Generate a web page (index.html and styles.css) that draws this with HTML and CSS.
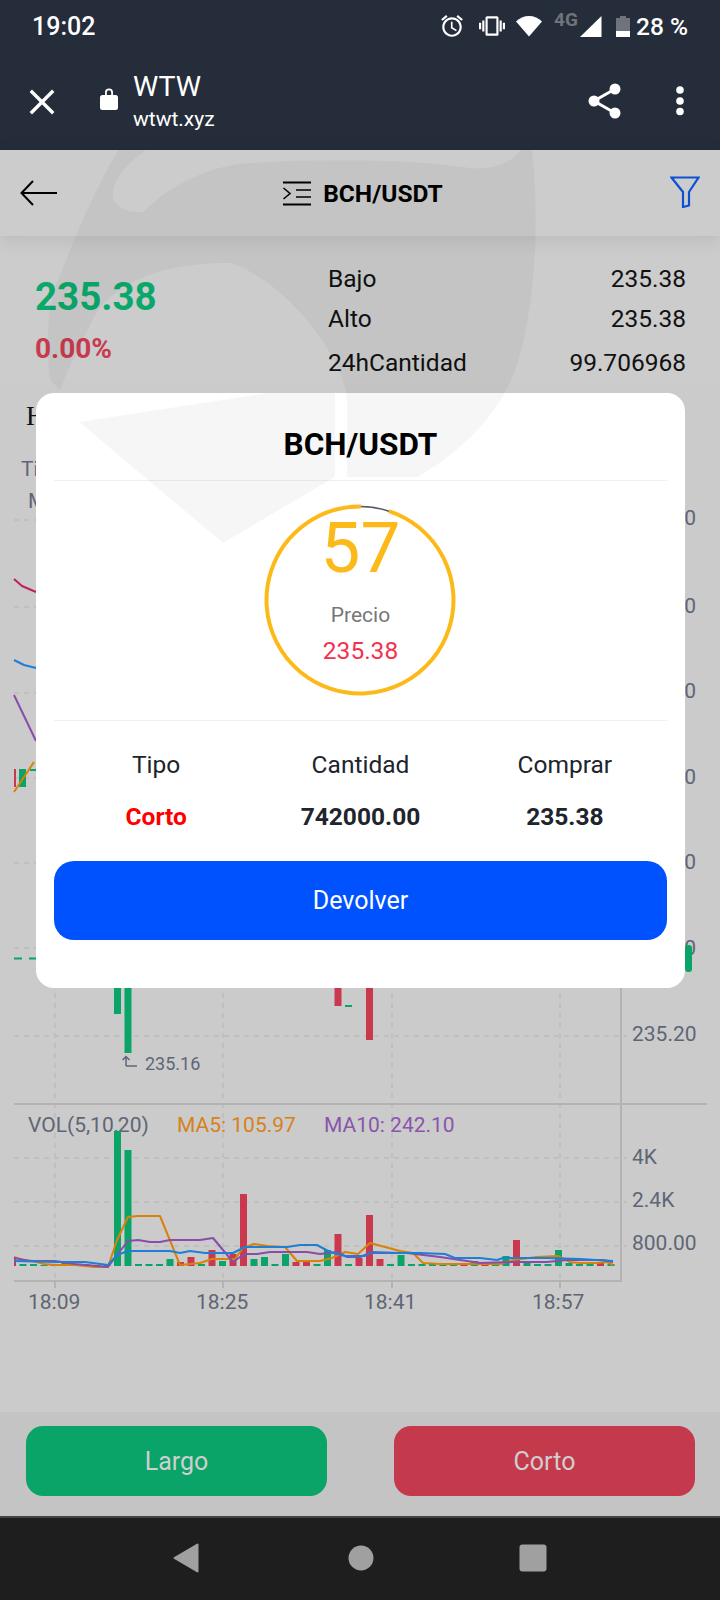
FILE: index.html
```html
<!DOCTYPE html>
<html lang="es">
<head>
<meta charset="utf-8">
<title>WTW</title>
<link rel="stylesheet" href="styles.css">
</head>
<body>
<div class="phone">
  <div class="topbar">
    <div class="status">
      <span class="time">19:02</span>
      <div class="status-icons">
        <svg class="ic-alarm" width="26" height="26" viewBox="0 0 24 24"><path fill="#fff" d="M22 5.72l-4.6-3.86-1.29 1.53 4.6 3.86L22 5.72zM7.88 3.39L6.6 1.86 2 5.71l1.29 1.53 4.59-3.85zM12.5 8H11v6l4.75 2.85.75-1.23-4-2.37V8zM12 4c-4.97 0-9 4.03-9 9s4.03 9 9 9 9-4.03 9-9-4.03-9-9-9zm0 16c-3.87 0-7-3.13-7-7s3.13-7 7-7 7 3.13 7 7-3.13 7-7 7z"/></svg>
        <svg class="ic-vib" width="26" height="26" viewBox="0 0 24 24"><path fill="#fff" d="M0 15h2V9H0v6zm3 2h2V7H3v10zm19-8v6h2V9h-2zm-3 8h2V7h-2v10zM16.5 3h-9C6.67 3 6 3.67 6 4.5v15c0 .83.67 1.5 1.5 1.5h9c.83 0 1.5-.67 1.5-1.5v-15c0-.83-.67-1.5-1.5-1.5zM16 19H8V5h8v14z"/></svg>
        <svg class="ic-wifi" width="26" height="22" viewBox="0 0 26 22"><path fill="#fff" d="M0 6.5C3.5 3 8 1 13 1s9.500 2 13 5.500L13 21.500z"/></svg>
        <span class="net">4G</span>
        <svg class="ic-signal" width="22" height="21" viewBox="0 0 22 21"><path fill="#fff" d="M21.500 0v21H0z"/></svg>
        <svg class="ic-batt" width="14" height="21" viewBox="0 0 14 21"><path fill="#6f747c" d="M4 0h6v2h4v13H0V2h4z"/><path fill="#fff" d="M0 15h14v6H0z"/></svg>
        <span class="pct">28 %</span>
      </div>
    </div>
    <div class="browser">
      <svg class="ic-close" width="26" height="26" viewBox="0 0 26 26"><path stroke="#fff" stroke-width="3.400" stroke-linecap="square" d="M3 3l20 20M23 3L3 23"/></svg>
      <svg class="ic-lock" width="18" height="23" viewBox="0 0 18 23"><path fill="#fff" d="M5 8V5.500a4 4 0 0 1 8 0V8h-1.800V5.500a2.200 2.200 0 0 0-4.400 0V8z"/><rect fill="#fff" y="8" width="18" height="15" rx="2.500"/></svg>
      <div class="site">
        <div class="site-name">WTW</div>
        <div class="site-url">wtwt.xyz</div>
      </div>
      <svg class="ic-share" width="34" height="36" viewBox="0 0 34 36"><path stroke="#fff" stroke-width="3" fill="none" d="M27 6L6 18l21 12"/><circle fill="#fff" cx="27" cy="6" r="5.500"/><circle fill="#fff" cx="6" cy="18" r="5.500"/><circle fill="#fff" cx="27" cy="30" r="5.500"/></svg>
      <svg class="ic-more" width="10" height="32" viewBox="0 0 10 32"><circle fill="#fff" cx="5" cy="5" r="3.800"/><circle fill="#fff" cx="5" cy="16" r="3.800"/><circle fill="#fff" cx="5" cy="26.500" r="3.800"/></svg>
    </div>
  </div>

  <main class="page">
    <header class="head">
      <svg class="ic-back" width="38" height="26" viewBox="0 0 38 26"><path stroke="#000" stroke-width="2" fill="none" d="M37 13H2M13 1L1.500 13 13 25"/></svg>
      <div class="head-title">
        <svg width="30" height="25" viewBox="0 0 30 25"><path stroke="#000" stroke-width="2.200" fill="none" d="M1 1.500h28M1 23.500h28"/><path stroke="#000" stroke-width="1.600" fill="none" d="M14 9h15M14 16h15M1.500 7L8 12.500 1.500 18"/></svg>
        <span>BCH/USDT</span>
      </div>
      <svg class="ic-filter" width="30" height="32" viewBox="0 0 30 32"><path stroke="#0e50d4" stroke-width="2.200" fill="none" d="M1.500 1.500h27L19 16v13.500l-6 1.500V16z"/></svg>
    </header>

    <section class="info">
      <div class="quote">
        <div class="price">235.38</div>
        <div class="change">0.00%</div>
      </div>
      <div class="stats">
        <div class="stat stat-a"><span>Bajo</span><span>235.38</span></div>
        <div class="stat stat-b"><span>Alto</span><span>235.38</span></div>
        <div class="stat stat-c"><span>24hCantidad</span><span>99.706968</span></div>
      </div>
    </section>

    <section class="chart">
      <svg class="chart-svg" width="720" height="1029" viewBox="0 383 720 1029">
        <text class="serif" x="26" y="425">H</text>
        <text class="ct" x="21" y="476">Ti</text>
        <text class="ct" x="28" y="508">M</text>

        <path class="grid" d="M14 520H627M14 607H627M14 693H627M14 778H627M14 863H627M14 948H627M14 1036H627M14 1158H627M14 1202H627M14 1246H627"/>
        <path class="grid" d="M55 393V1281M223 393V1281M392 393V1281M560 393V1281"/>

        <path class="axis" d="M621 393V1282M14 1104H707M14 1281H622M55 1281v7M223 1281v7M392 1281v7M560 1281v7"/>

        <text class="ct" x="696" y="525" text-anchor="end">0</text>
        <text class="ct" x="696" y="613" text-anchor="end">0</text>
        <text class="ct" x="696" y="698" text-anchor="end">0</text>
        <text class="ct" x="696" y="784" text-anchor="end">0</text>
        <text class="ct" x="696" y="869" text-anchor="end">0</text>
        <text class="ct" x="696" y="955" text-anchor="end">0</text>
        <text class="ct" x="632" y="1041">235.20</text>
        <text class="ct" x="632" y="1164">4K</text>
        <text class="ct" x="632" y="1207">2.4K</text>
        <text class="ct" x="632" y="1250">800.00</text>

        <rect class="up" x="685" y="945" width="7" height="27" rx="3"/>
        <path class="pline" d="M14 958.500H40"/>

        <polyline class="l-pink" points="14,579 22,586 36,592"/>
        <polyline class="l-blue" points="14,660 24,665 36,668"/>
        <polyline class="l-purple" points="14,695 36,741"/>
        <rect class="down" x="14" y="769" width="2" height="18"/>
        <rect class="up" x="19" y="769" width="7" height="18"/>
        <rect class="up" x="30" y="769" width="6" height="2"/>
        <polyline class="l-orange" points="14,792 34,762"/>

        <rect class="up" x="114" y="960" width="7" height="54"/>
        <rect class="up" x="124.500" y="960" width="7" height="93"/>
        <rect class="down" x="334.500" y="960" width="7" height="46"/>
        <rect class="up" x="345" y="1005" width="7" height="2"/>
        <rect class="down" x="366" y="960" width="7" height="80"/>

        <path class="mark" d="M126 1066v-9M122.500 1060l3.500-3.500 3.500 3.500M126 1066h11"/>
        <text class="cs" x="145" y="1069.500">235.16</text>

        <text class="ct" x="28" y="1131.500">VOL(5,10,20)</text>
        <text class="ct t-orange" x="177" y="1131.500">MA5: 105.97</text>
        <text class="ct t-purple" x="324" y="1131.500">MA10: 242.10</text>

        <g class="up">
          <rect x="19.500" y="1264" width="7" height="2"/><rect x="30" y="1264" width="7" height="2"/><rect x="40.500" y="1265" width="7" height="1"/><rect x="82.500" y="1264" width="7" height="2"/>
          <rect x="114" y="1131" width="7" height="135"/><rect x="124.500" y="1150" width="7" height="116"/><rect x="135" y="1264" width="7" height="2"/><rect x="145.500" y="1264" width="7" height="2"/><rect x="156" y="1264" width="7" height="2"/><rect x="166.500" y="1259" width="7" height="7"/>
          <rect x="198" y="1264" width="7" height="2"/><rect x="219" y="1261" width="7" height="5"/><rect x="250.500" y="1259" width="7" height="7"/><rect x="261" y="1257" width="7" height="9"/><rect x="271.500" y="1264" width="7" height="2"/><rect x="282" y="1254" width="7" height="12"/>
          <rect x="313.500" y="1264" width="7" height="2"/><rect x="324" y="1250" width="7" height="16"/><rect x="345" y="1264" width="7" height="2"/><rect x="387" y="1264" width="7" height="2"/><rect x="397.500" y="1255" width="7" height="11"/>
          <rect x="408" y="1264" width="7" height="2"/><rect x="418.500" y="1264" width="7" height="2"/><rect x="429" y="1264" width="7" height="2"/><rect x="439.500" y="1264" width="7" height="2"/><rect x="450" y="1263" width="7" height="3"/><rect x="471" y="1261" width="7" height="5"/>
          <rect x="492" y="1264" width="7" height="2"/><rect x="502.500" y="1256" width="7" height="10"/><rect x="523.500" y="1263" width="7" height="3"/><rect x="534" y="1264" width="7" height="2"/><rect x="544.500" y="1264" width="7" height="2"/><rect x="555" y="1250" width="7" height="16"/>
          <rect x="565.500" y="1263" width="7" height="3"/><rect x="576" y="1264" width="7" height="2"/><rect x="586.500" y="1264" width="7" height="2"/><rect x="607.500" y="1264" width="7" height="2"/>
        </g>
        <g class="down">
          <rect x="14" y="1257" width="2" height="9"/><rect x="51" y="1264" width="7" height="2"/><rect x="61.500" y="1262" width="7" height="4"/><rect x="72" y="1264" width="7" height="2"/><rect x="93" y="1265" width="7" height="1"/><rect x="103.500" y="1264" width="7" height="2"/>
          <rect x="177" y="1262" width="7" height="4"/><rect x="187.500" y="1257" width="7" height="9"/><rect x="208.500" y="1250" width="7" height="16"/><rect x="229.500" y="1254" width="7" height="12"/><rect x="240" y="1194" width="7" height="72"/>
          <rect x="292.500" y="1262" width="7" height="4"/><rect x="303" y="1262" width="7" height="4"/><rect x="334.500" y="1234" width="7" height="32"/><rect x="355.500" y="1258" width="7" height="8"/><rect x="366" y="1215" width="7" height="51"/><rect x="376.500" y="1259" width="7" height="7"/>
          <rect x="460.500" y="1263" width="7" height="3"/><rect x="481.500" y="1264" width="7" height="2"/><rect x="513" y="1240" width="7" height="26"/><rect x="597" y="1263" width="7" height="3"/>
        </g>

        <polyline class="l-orange" points="14,1257 23,1260 33,1261 44,1264 55,1265 75,1265 95,1267 108,1267 117,1240 128,1217 138,1216 160,1216 180,1265 200,1263 212,1259 235,1259 243,1248 254,1244 268,1246 285,1247 297,1261 320,1261 332,1258 345,1252 358,1254 370,1243 385,1247 400,1251 413,1253 423,1263 440,1264 460,1264 473,1264 500,1264 513,1260 537,1257 558,1256 570,1262 580,1263 597,1263 607,1262 613,1265"/>
        <polyline class="l-purple" points="14,1258 30,1261 55,1261 75,1264 108,1267 117,1255 128,1241 138,1240 150,1242 160,1242 170,1240 200,1240 213,1238 233,1262 240,1257 247,1254 257,1254 270,1252 307,1252 320,1254 337,1252 347,1257 360,1257 370,1253 407,1253 440,1257 467,1261 480,1263 513,1262 547,1262 567,1260 603,1260 613,1262"/>
        <polyline class="l-blue" points="14,1261 55,1262 85,1262 108,1265 117,1255 128,1251 170,1251 180,1253 190,1251 205,1253 233,1253 245,1247 270,1247 287,1247 300,1245 317,1245 330,1252 345,1256 365,1256 372,1252 400,1253 420,1253 445,1254 455,1258 480,1258 497,1260 503,1258 547,1258 580,1259 613,1261"/>

        <text class="ct" x="28" y="1309">18:09</text>
        <text class="ct" x="196" y="1309">18:25</text>
        <text class="ct" x="364" y="1309">18:41</text>
        <text class="ct" x="532" y="1309">18:57</text>
      </svg>
    </section>

    <footer class="actions">
      <button class="act act-long">Largo</button>
      <button class="act act-short">Corto</button>
    </footer>
  </main>

  <nav class="navbar">
    <svg width="26" height="30" viewBox="0 0 26 30"><path fill="#a0a0a0" stroke="#a0a0a0" stroke-width="2" stroke-linejoin="round" d="M24.500 1.500v27L1.500 15z"/></svg>
    <svg class="nav-home" width="26" height="26" viewBox="0 0 26 26"><circle fill="#a0a0a0" cx="13" cy="13" r="12.500"/></svg>
    <svg width="28" height="28" viewBox="0 0 28 28"><rect fill="#a0a0a0" x="0.500" y="0.500" width="27" height="27" rx="3"/></svg>
  </nav>

  <div class="modal">
    <h2 class="modal-title">BCH/USDT</h2>
    <div class="timer-wrap">
      <div class="timer">
        <svg class="timer-ring" width="192" height="192" viewBox="0 0 192 192">
          <circle cx="96" cy="96" r="93.500" fill="none" stroke="#555b66" stroke-width="1.500"/>
          <circle cx="96" cy="96" r="93.500" fill="none" stroke="#fcba1a" stroke-width="4" stroke-dasharray="558 600" transform="rotate(-72 96 96)"/>
        </svg>
        <div class="count">57</div>
        <div class="count-label">Precio</div>
        <div class="count-price">235.38</div>
      </div>
    </div>
    <div class="order">
      <div class="order-cell"><span class="order-label">Tipo</span><strong class="order-val red">Corto</strong></div>
      <div class="order-cell"><span class="order-label">Cantidad</span><strong class="order-val">742000.00</strong></div>
      <div class="order-cell"><span class="order-label">Comprar</span><strong class="order-val">235.38</strong></div>
    </div>
    <button class="back-btn">Devolver</button>
  </div>

  <svg class="watermark" width="720" height="1600" viewBox="0 0 720 1600">
    <path d="M118 150L146 150C125 165 113 180 113 195C113 207 128 213 143 212C170 185 210 165 250 163C330 158 420 160 470 168C495 170 512 162 521 150L532 150C540 220 535 300 520 355C510 395 480 440 418 477L347 477L347 400C347 370 300 290 232 263C150 262 110 290 94 317C80 345 70 365 60 390L50 380C45 340 48 300 60 275C74 240 91 197 118 150Z"/>
    <path d="M79 422L267 393L335 393L335 477L223 543Z"/>
  </svg>
</div>
</body>
</html>
```

FILE: styles.css
```css
* { box-sizing: border-box; }
html, body { margin: 0; padding: 0; }
body { font-family: Roboto, "Liberation Sans", sans-serif; background: #ccc; }
.phone { position: relative; width: 720px; height: 1600px; display: flex; flex-direction: column; overflow: hidden; }

/* system + browser chrome */
.topbar { height: 150px; background: #252c3a; color: #fff; flex: none; }
.status { height: 52px; padding: 0 32px 0 32px; display: flex; align-items: center; justify-content: space-between; }
.time { font-size: 25px; font-weight: 500; }
.status-icons { display: flex; align-items: center; }
.status-icons svg { display: block; }
.ic-vib { margin-left: 14px; }
.ic-wifi { margin-left: 11px; }
.net { margin: -1px 0 0 12px; font-size: 19px; font-weight: 700; color: #6f747c; align-self: flex-start; width: 26px; line-height: 18px; }
.ic-signal { margin-left: 0; }
.ic-batt { margin-left: 14px; }
.pct { margin-left: 6px; font-size: 24.500px; font-weight: 500; }
.browser { height: 98px; display: flex; align-items: center; padding: 0 35px 0 29px; }
.ic-close { margin-top: 2px; }
.ic-lock { margin: -5px 0 0 45px; }
.site { margin-left: 15px; flex: 1; margin-top: 2px; }
.site-name { font-size: 28.500px; line-height: 34px; }
.site-url { font-size: 21px; line-height: 30px; }
.ic-more { margin-left: 53px; }

/* page */
.page { flex: 1; display: flex; flex-direction: column; background: #ccc; min-height: 0; }
.head { flex: none; height: 86px; padding: 0 20px; display: flex; align-items: center; justify-content: space-between; position: relative; box-shadow: 0 4px 18px rgba(0,0,0,.09); }
.head-title { display: flex; align-items: center; gap: 11px; font-size: 24.500px; font-weight: 700; color: #000; margin-right: 3px; }
.ic-filter { margin-top: -2px; }
.info { flex: none; height: 147px; display: flex; padding: 0 34px 0 35px; }
.quote { width: 293px; }
.price { font-size: 38.500px; font-weight: 700; line-height: 44px; color: #0ba86b; margin-top: 39px; }
.change { font-size: 28px; font-weight: 700; line-height: 30px; color: #c93a4e; margin-top: 15px; }
.stats { flex: 1; }
.stat { display: flex; justify-content: space-between; font-size: 24.500px; line-height: 30px; color: #111; }
.stat-a { margin-top: 28px; }
.stat-b { margin-top: 10px; }
.stat-c { margin-top: 14px; }

.chart { flex: 1; min-height: 0; background: #cbcbcb; }
.chart-svg { display: block; }
.serif { font-family: "Liberation Serif", serif; font-size: 27px; fill: #111; }
.ct { font-size: 21px; fill: #5e6675; }
.cs { font-size: 18px; fill: #5e6675; }
.t-orange { fill: #d6821a; }
.t-purple { fill: #8a55ad; }
.grid { stroke: #bdbdbd; stroke-width: 1.500; stroke-dasharray: 5 5; fill: none; }
.axis { stroke: #b3b3b3; stroke-width: 2; fill: none; }
.pline { stroke: #0aa368; stroke-width: 2; stroke-dasharray: 8 7; fill: none; }
.up { fill: #0aa368; }
.down { fill: #c9384d; }
.mark { stroke: #5e6675; stroke-width: 1.500; fill: none; }
.l-orange, .l-purple, .l-blue, .l-pink { fill: none; stroke-width: 2; stroke-linejoin: round; }
.l-orange { stroke: #da8108; }
.l-purple { stroke: #8a4cab; }
.l-blue { stroke: #1f7fd6; }
.l-pink { stroke: #bf1f62; }

.actions { flex: none; height: 104px; background: #c4c4c4; padding: 14px 25px 20px 26px; display: flex; justify-content: space-between; }
.act { width: 301px; border: 0; border-radius: 17px; font: 400 25px Roboto, sans-serif; color: #cfcfcf; }
.act-long { background: #0aa368; }
.act-short { background: #c5394c; }

.navbar { flex: none; height: 84px; background: #1e1e1e; border-top: 2px solid #444; display: flex; align-items: center; justify-content: center; gap: 147px; padding-bottom: 3px; }
.navbar svg { display: block; }
.nav-home { margin-left: 2px; margin-right: -2px; }

/* modal */
.modal { position: absolute; left: 36px; top: 393px; width: 649px; height: 595px; background: #fff; border-radius: 18px; padding: 0 18px; display: flex; flex-direction: column; }
.modal-title { margin: 0; height: 88px; padding-top: 34px; border-bottom: 1px solid #f0f0f0; text-align: center; font-size: 31.500px; line-height: 36px; font-weight: 700; color: #000; }
.timer-wrap { height: 240px; border-bottom: 1px solid #f0f0f0; padding: 23px 2px 0 0; display: flex; justify-content: center; }
.timer { position: relative; width: 192px; height: 192px; padding-left: 2px; text-align: center; }
.timer-ring { position: absolute; left: 0; top: 0; }
.count { position: relative; font-size: 71px; line-height: 84px; color: #fcba1a; padding-top: 2px; }
.count-label { position: relative; font-size: 21px; line-height: 26px; color: #777; margin-top: 12px; }
.count-price { position: relative; font-size: 24.500px; line-height: 30px; color: #f5304f; margin-top: 8px; }
.order { display: grid; grid-template-columns: repeat(3, 1fr); padding-top: 29px; height: 140px; }
.order-cell { display: flex; flex-direction: column; align-items: center; }
.order-label { font-size: 24.500px; line-height: 30px; color: #20242c; }
.order-val { font-size: 24.500px; line-height: 30px; font-weight: 700; color: #20242c; margin-top: 22px; }
.order-val.red { color: #f00; }
.back-btn { height: 79px; border: 0; border-radius: 20px; background: #0052ff; color: #fff; font: 400 25px Roboto, sans-serif; }

.watermark { position: absolute; left: 0; top: 0; pointer-events: none; fill: rgba(0,0,0,.035); }
```
